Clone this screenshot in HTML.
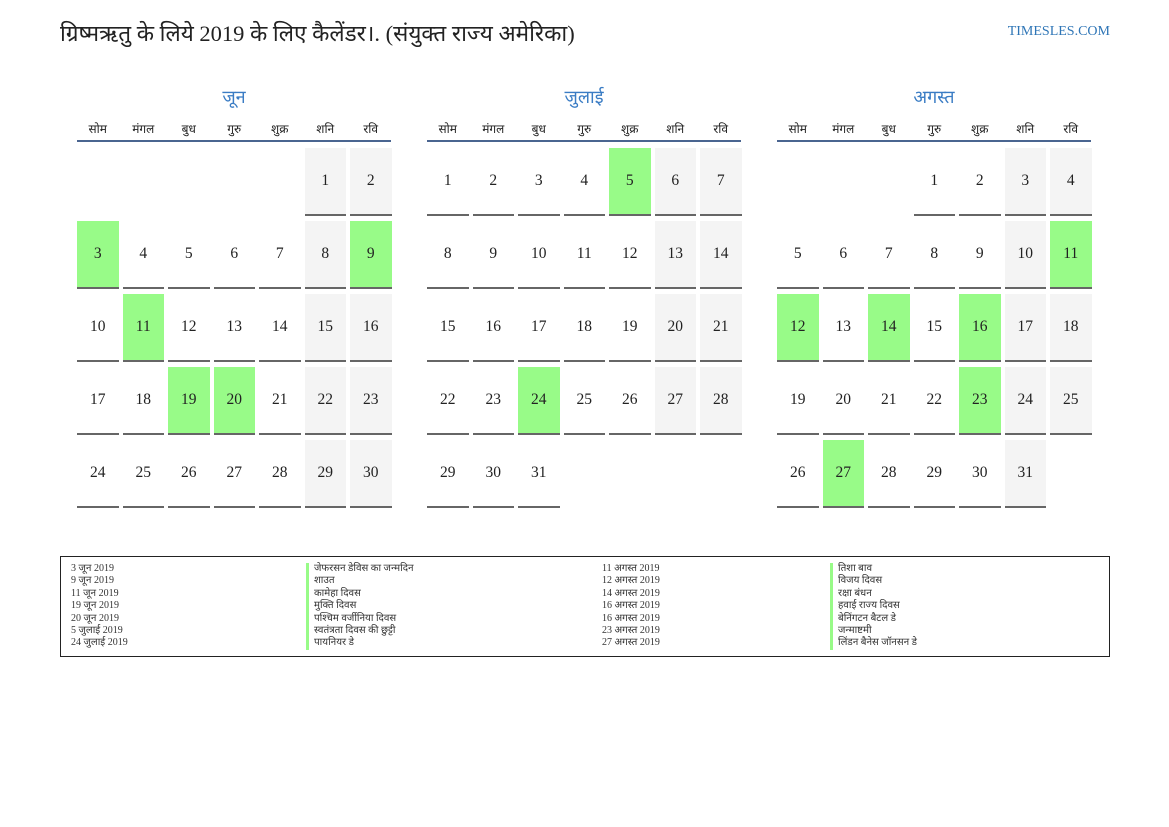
<!DOCTYPE html>
<html><head><meta charset="utf-8"><style>
*{margin:0;padding:0;box-sizing:border-box}
body{width:1169px;height:827px;background:#fff;position:relative;font-family:"Liberation Serif","Noto Serif CJK SC",serif;color:#222;overflow:hidden}
.title{position:absolute;left:60px;top:17px;font-size:22.5px;color:#222;white-space:nowrap}
.site{position:absolute;right:59px;top:24px;font-size:14px;color:#2e75b6}
.month{position:absolute;top:84px;width:314px}
.mname{text-align:center;font-size:18px;color:#3a7cc4;height:26px;line-height:26px}
.wd{display:grid;grid-template-columns:repeat(7,41.5px);column-gap:4px;height:32px;border-bottom:2px solid #4a6590;font-size:12px;align-items:center;text-align:center;padding-top:6px}
.grid{display:grid;grid-template-columns:repeat(7,41.5px);column-gap:4px;row-gap:5px;margin-top:6px;grid-auto-rows:68px}
.grid div{display:flex;align-items:center;justify-content:center;font-size:15.5px;border-bottom:2px solid #666;color:#222}
.grid div.e{border:none}
.grid div.w{background:#f4f4f4}
.grid div.g{background:#98fb88}
.legend{position:absolute;left:60px;top:556px;width:1050px;height:101px;border:1.5px solid #222;font-size:10px;line-height:12.4px;color:#333}
.col{position:absolute;top:6px}
.bar{border-left:3px solid #98fb88;padding-left:5px}
</style></head><body>
<div class="title">ग्रिष्मऋतु के लिये 2019 के लिए कैलेंडर।. (संयुक्त राज्य अमेरिका)</div>
<div class="site">TIMESLES.COM</div>

<div class="month" style="left:77px">
<div class="mname">जून</div>
<div class="wd"><span>सोम</span><span>मंगल</span><span>बुध</span><span>गुरु</span><span>शुक्र</span><span>शनि</span><span>रवि</span></div>
<div class="grid">
<div class="e"></div><div class="e"></div><div class="e"></div><div class="e"></div><div class="e"></div><div class="w">1</div><div class="w">2</div>
<div class="g">3</div><div>4</div><div>5</div><div>6</div><div>7</div><div class="w">8</div><div class="g">9</div>
<div>10</div><div class="g">11</div><div>12</div><div>13</div><div>14</div><div class="w">15</div><div class="w">16</div>
<div>17</div><div>18</div><div class="g">19</div><div class="g">20</div><div>21</div><div class="w">22</div><div class="w">23</div>
<div>24</div><div>25</div><div>26</div><div>27</div><div>28</div><div class="w">29</div><div class="w">30</div>
</div></div>

<div class="month" style="left:427px">
<div class="mname">जुलाई</div>
<div class="wd"><span>सोम</span><span>मंगल</span><span>बुध</span><span>गुरु</span><span>शुक्र</span><span>शनि</span><span>रवि</span></div>
<div class="grid">
<div>1</div><div>2</div><div>3</div><div>4</div><div class="g">5</div><div class="w">6</div><div class="w">7</div>
<div>8</div><div>9</div><div>10</div><div>11</div><div>12</div><div class="w">13</div><div class="w">14</div>
<div>15</div><div>16</div><div>17</div><div>18</div><div>19</div><div class="w">20</div><div class="w">21</div>
<div>22</div><div>23</div><div class="g">24</div><div>25</div><div>26</div><div class="w">27</div><div class="w">28</div>
<div>29</div><div>30</div><div>31</div>
</div></div>

<div class="month" style="left:777px">
<div class="mname">अगस्त</div>
<div class="wd"><span>सोम</span><span>मंगल</span><span>बुध</span><span>गुरु</span><span>शुक्र</span><span>शनि</span><span>रवि</span></div>
<div class="grid">
<div class="e"></div><div class="e"></div><div class="e"></div><div>1</div><div>2</div><div class="w">3</div><div class="w">4</div>
<div>5</div><div>6</div><div>7</div><div>8</div><div>9</div><div class="w">10</div><div class="g">11</div>
<div class="g">12</div><div>13</div><div class="g">14</div><div>15</div><div class="g">16</div><div class="w">17</div><div class="w">18</div>
<div>19</div><div>20</div><div>21</div><div>22</div><div class="g">23</div><div class="w">24</div><div class="w">25</div>
<div>26</div><div class="g">27</div><div>28</div><div>29</div><div>30</div><div class="w">31</div>
</div></div>

<div class="legend">
<div class="col" style="left:10px">3 जून 2019<br>9 जून 2019<br>11 जून 2019<br>19 जून 2019<br>20 जून 2019<br>5 जुलाई 2019<br>24 जुलाई 2019</div>
<div class="col bar" style="left:245px">जेफरसन डेविस का जन्मदिन<br>शाउत<br>कामेहा दिवस<br>मुक्ति दिवस<br>पश्चिम वर्जीनिया दिवस<br>स्वतंत्रता दिवस की छुट्टी<br>पायनियर डे</div>
<div class="col" style="left:541px">11 अगस्त 2019<br>12 अगस्त 2019<br>14 अगस्त 2019<br>16 अगस्त 2019<br>16 अगस्त 2019<br>23 अगस्त 2019<br>27 अगस्त 2019</div>
<div class="col bar" style="left:769px">तिशा बाव<br>विजय दिवस<br>रक्षा बंधन<br>हवाई राज्य दिवस<br>बेनिंगटन बैटल डे<br>जन्माष्टमी<br>लिंडन बैनेस जॉनसन डे</div>
</div>
</body></html>
